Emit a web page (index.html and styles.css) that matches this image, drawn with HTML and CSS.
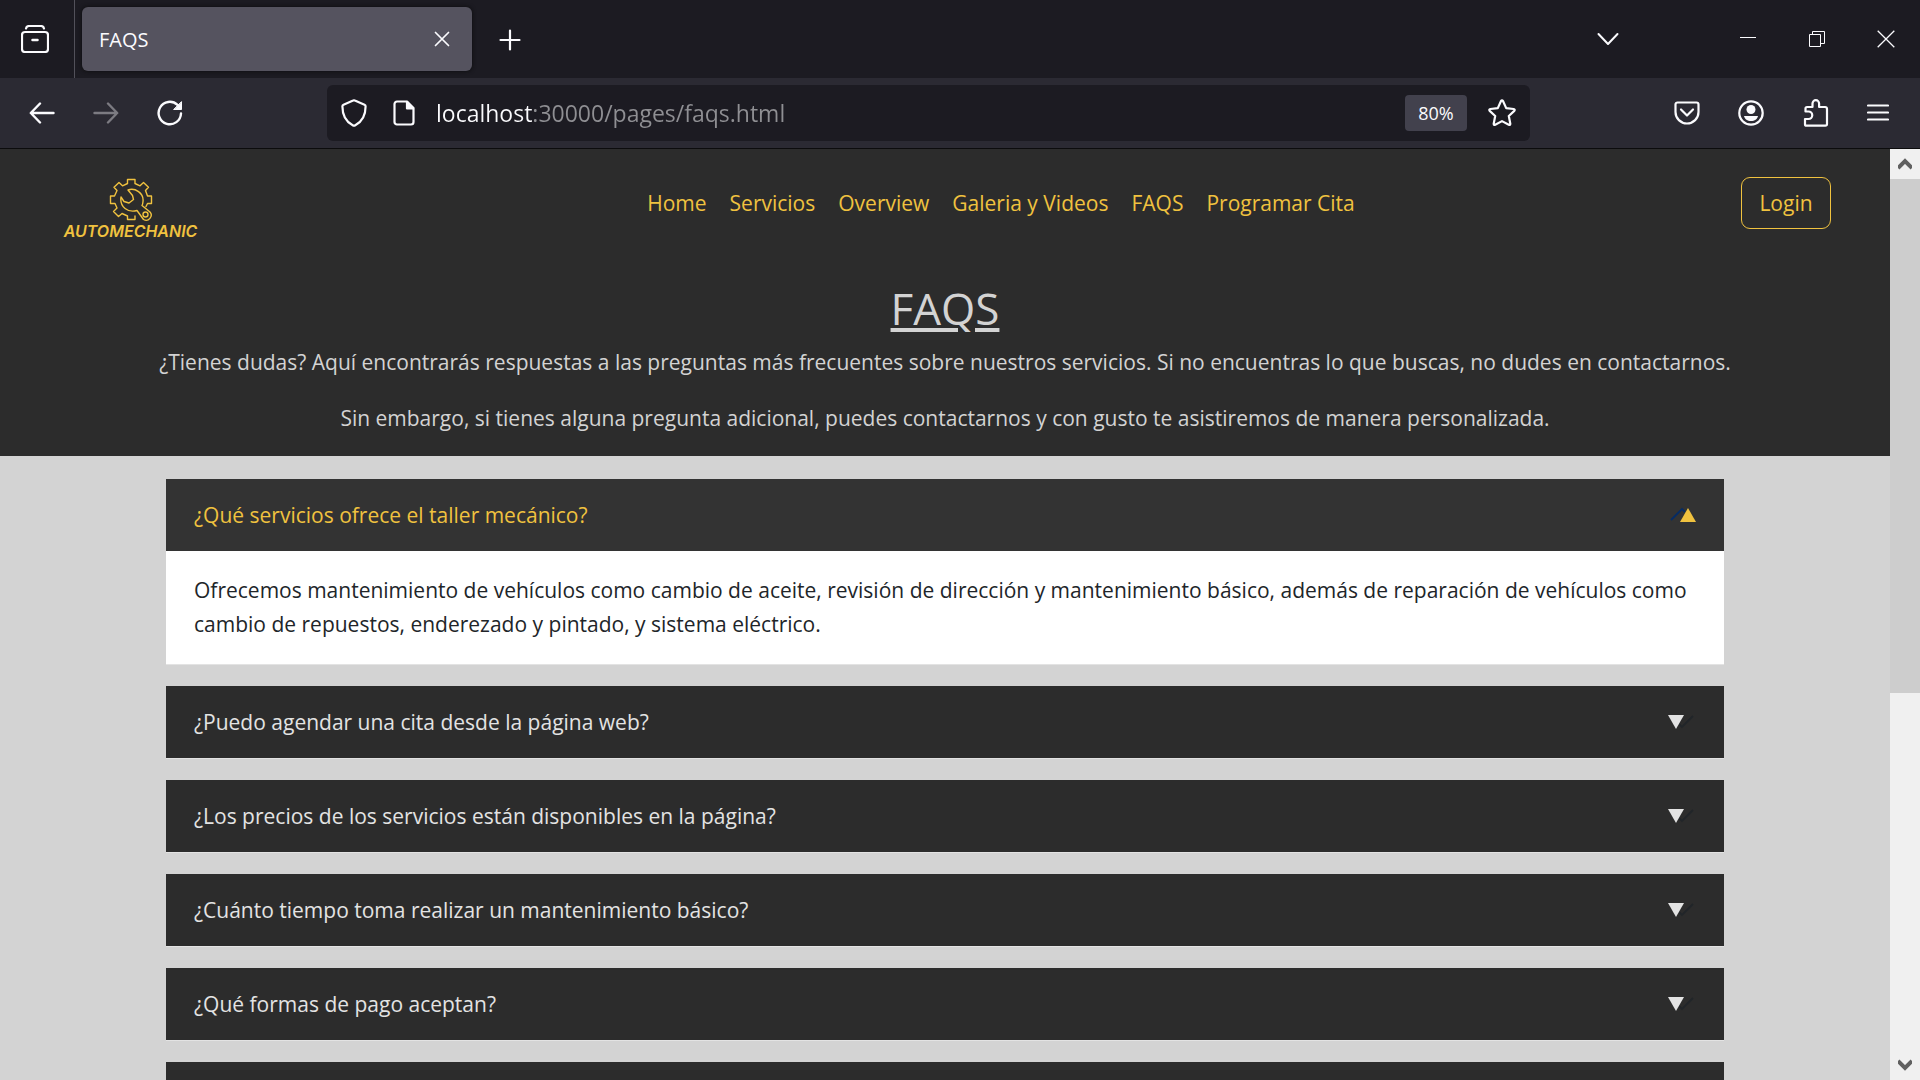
FILE: index.html
```html
<!DOCTYPE html>
<html lang="es">
<head>
<meta charset="utf-8">
<meta name="viewport" content="width=device-width, initial-scale=1">
<title>FAQS</title>
<link rel="stylesheet" href="styles.css">
</head>
<body>
<div class="browser">
  <div class="tabbar">
    <button class="icon-btn view-btn" aria-label="Firefox View">
      <svg width="28" height="28" viewBox="0 0 28 28" fill="none" stroke="currentColor" stroke-width="2.200" stroke-linecap="round"><path d="M5 3.500C5.300 1.800 6 1 8 1h12c2 0 2.700.8 3 2.500"/><rect x="1" y="7" width="26" height="20" rx="3"/><path d="M11.500 15h5" stroke-width="2.500"/></svg>
    </button>
    <div class="tab">
      <span class="tab-title">FAQS</span>
      <button class="icon-btn" aria-label="Cerrar pestaña">
        <svg width="16" height="16" viewBox="0 0 16 16" fill="none" stroke="currentColor" stroke-width="1.700" stroke-linecap="round"><path d="M1.500 1.500l13 13M14.500 1.500l-13 13"/></svg>
      </button>
    </div>
    <button class="icon-btn new-tab" aria-label="Nueva pestaña">
      <svg width="22" height="22" viewBox="0 0 22 22" fill="none" stroke="currentColor" stroke-width="2.200" stroke-linecap="round"><path d="M11 1.500v19M1.500 11h19"/></svg>
    </button>
    <div class="window-controls">
      <button class="icon-btn tabs-list" aria-label="Listar pestañas">
        <svg width="22" height="14" viewBox="0 0 22 14" fill="none" stroke="currentColor" stroke-width="2" stroke-linecap="round" stroke-linejoin="round"><path d="M1.500 2L11 12l9.500-10"/></svg>
      </button>
      <button class="icon-btn win-btn" aria-label="Minimizar">
        <svg width="16" height="16" viewBox="0 0 16 16" fill="currentColor"><path d="M0 6h16v1H0z"/></svg>
      </button>
      <button class="icon-btn win-btn" aria-label="Restaurar">
        <svg width="16" height="16" viewBox="0 0 16 16" fill="none" stroke="currentColor"><path d="M.5 3.500h11v12H.5zM3.500 3.500v-3h12v12h-4"/></svg>
      </button>
      <button class="icon-btn win-btn" aria-label="Cerrar">
        <svg width="18" height="18" viewBox="0 0 18 18" fill="none" stroke="currentColor" stroke-width="1.300"><path d="M.7.7l16.600 16.600M17.300.7L.7 17.300"/></svg>
      </button>
    </div>
  </div>

  <div class="toolbar">
    <div class="nav-buttons">
      <button class="icon-btn" aria-label="Atrás">
        <svg width="26" height="22" viewBox="0 0 26 22" fill="none" stroke="currentColor" stroke-width="2.400" stroke-linecap="round" stroke-linejoin="round"><path d="M24.500 11H2M11 1.500L1.800 11l9.200 9.500"/></svg>
      </button>
      <button class="icon-btn" aria-label="Adelante" disabled>
        <svg width="26" height="22" viewBox="0 0 26 22" fill="none" stroke="currentColor" stroke-width="2.400" stroke-linecap="round" stroke-linejoin="round"><path d="M1.500 11H24M15 1.500l9.200 9.500-9.200 9.500"/></svg>
      </button>
      <button class="icon-btn" aria-label="Recargar">
        <svg width="26" height="26" viewBox="0 0 26 26" fill="none" stroke="currentColor" stroke-width="2.400" stroke-linecap="round"><path d="M24 13.500A11.200 11.200 0 1 1 20.500 4.900l2 2"/><path d="M24.500 2v7.500h-7.500z" fill="currentColor" stroke-width="1"/></svg>
      </button>
    </div>
    <form class="urlbar">
      <svg width="26" height="28" viewBox="0 0 26 28" fill="none" stroke="currentColor" stroke-width="2.200" stroke-linejoin="round"><path d="M12.100 1.500a2 2 0 0 1 1.800 0l9.600 4.200c.7.300 1.100.9 1.100 1.600 0 8-3.200 15.300-10.300 19a2.500 2.500 0 0 1-2.600 0C4.600 22.600 1.400 15.300 1.400 7.300c0-.7.4-1.300 1.100-1.600z"/></svg>
      <svg class="doc-icon" width="22" height="26" viewBox="0 0 22 26" fill="none" stroke="currentColor" stroke-width="2.200" stroke-linejoin="round"><path d="M4 1.500h10l6.500 6.500v14a2.500 2.500 0 0 1-2.500 2.500H4A2.500 2.500 0 0 1 1.500 22V4A2.500 2.500 0 0 1 4 1.500z"/><path d="M14 2v6.500h6z" fill="currentColor"/></svg>
      <input class="url-input" type="text" aria-label="Dirección" value="localhost:30000/pages/faqs.html">
      <button class="zoom-badge" type="button">80%</button>
      <button class="icon-btn" type="button" aria-label="Marcar página">
        <svg width="28" height="28" viewBox="0 0 28 28" fill="none" stroke="currentColor" stroke-width="2.200" stroke-linejoin="round"><path d="M12.900 2.200q1.100-1.600 2.200 0l3.100 6.900 7.400.9q1.700.5.700 1.900l-5.500 5.100 1.500 7.700q0 1.700-1.500 1.100L14 22.100l-6.800 3.700q-1.500.6-1.500-1.100l1.500-7.700-5.500-5.100q-1-1.400.7-1.900l7.400-.9z"/></svg>
      </button>
    </form>
    <div class="tool-buttons">
      <button class="icon-btn" aria-label="Pocket">
        <svg width="26" height="24" viewBox="0 0 26 24" fill="none" stroke="currentColor" stroke-width="2.200" stroke-linecap="round" stroke-linejoin="round"><path d="M3.500 1.500h19a2 2 0 0 1 2 2V11a11.500 11.500 0 0 1-23 0V3.500a2 2 0 0 1 2-2z"/><path d="M7 8.500l6 6 6-6"/></svg>
      </button>
      <button class="icon-btn" aria-label="Cuenta">
        <svg width="26" height="26" viewBox="0 0 26 26" fill="none" stroke="currentColor" stroke-width="2.200"><circle cx="13" cy="13" r="11.700"/><circle cx="13" cy="9.500" r="4.500" fill="currentColor" stroke="none"/><path d="M6 16h14c-.5 3-3.500 5-7 5s-6.500-2-7-5z" fill="currentColor" stroke="none"/></svg>
      </button>
      <button class="icon-btn" aria-label="Extensiones">
        <svg width="26" height="28" viewBox="0 0 26 28" fill="none" stroke="currentColor" stroke-width="2.200" stroke-linejoin="round"><path d="M2.500 12V9.500a1.500 1.500 0 0 1 1.500-1.500h5.500V4.500a3.300 3.300 0 0 1 6.600 0V8H22a2 2 0 0 1 2 2v15a1.700 1.700 0 0 1-1.700 1.700H3.500a1.500 1.500 0 0 1-1.500-1.500V20h3.500a3.500 3.500 0 0 0 0-7.500H2.500z"/></svg>
      </button>
      <button class="icon-btn" aria-label="Menú">
        <svg width="22" height="20" viewBox="0 0 22 20" fill="none" stroke="currentColor" stroke-width="2.200" stroke-linecap="round"><path d="M1 2.500h20M1 9.500h20M1 16.500h20"/></svg>
      </button>
    </div>
  </div>

  <div class="viewport">
    <div class="page">
      <header class="site-header">
        <nav class="navbar">
          <a class="brand" href="#">
            <svg width="44" height="44" viewBox="0 0 44 44" fill="none" stroke="currentColor" stroke-width="1.400" stroke-linejoin="round" stroke-linecap="round"><path d="M26 38v3.500H18.500V38L13 35.500 9.500 38.500 4.500 33.500 8 30 6 25.500H1.500V18H5.500L8 12.500 5 9.300 10 4.500l3.500 3.300L18.500 5.500V1.500H26V5.500l5 2.300 3.500-3.300 5 4.800L36.500 12.500 38.500 18h4V25.500h-4l-1.500 3"/><path d="M19 12C26 9.500 35 15 34 23.500c-.1 1.600-.4 2.800-1 4l8 6.500c3.500 4-1.500 10.500-6.500 7.500l-6.500-9C19 35 10.500 29 12 19l3 4.500 5 1.500 4.500-3.500-1-4z"/><circle cx="36.500" cy="36.500" r="2.500"/></svg>
            <span class="brand-name">AUTOMECHANIC</span>
          </a>
          <div class="nav-links">
            <a href="#">Home</a>
            <a href="#">Servicios</a>
            <a href="#">Overview</a>
            <a href="#">Galeria y Videos</a>
            <a href="#">FAQS</a>
            <a href="#">Programar Cita</a>
          </div>
          <button class="login">Login</button>
        </nav>
        <div class="intro">
          <h1>FAQS</h1>
          <p>¿Tienes dudas? Aquí encontrarás respuestas a las preguntas más frecuentes sobre nuestros servicios. Si no encuentras lo que buscas, no dudes en contactarnos.</p>
          <p>Sin embargo, si tienes alguna pregunta adicional, puedes contactarnos y con gusto te asistiremos de manera personalizada.</p>
        </div>
      </header>

      <main class="faq-list">
        <section class="faq">
          <h2><button class="question open" aria-expanded="true">¿Qué servicios ofrece el taller mecánico?
            <svg class="marker" width="28" height="16" viewBox="0 0 28 16"><path d="M3 13L14 2l3 3" fill="none" stroke="#052c65" stroke-width="1.800"/><path d="M12 15L20 1l8 14z" fill="#f0c23f"/></svg></button></h2>
          <p class="answer">Ofrecemos mantenimiento de vehículos como cambio de aceite, revisión de dirección y mantenimiento básico, además de reparación de vehículos como cambio de repuestos, enderezado y pintado, y sistema eléctrico.</p>
        </section>
        <section class="faq">
          <h2><button class="question" aria-expanded="false">¿Puedo agendar una cita desde la página web?
            <svg class="marker" width="28" height="16" viewBox="0 0 28 16"><path d="M11 10l3 3L25 2" fill="none" stroke="#212529" stroke-width="1.800"/><path d="M0 1h16L8 15z" fill="#e3e3e3"/></svg></button></h2>
        </section>
        <section class="faq">
          <h2><button class="question" aria-expanded="false">¿Los precios de los servicios están disponibles en la página?
            <svg class="marker" width="28" height="16" viewBox="0 0 28 16"><path d="M11 10l3 3L25 2" fill="none" stroke="#212529" stroke-width="1.800"/><path d="M0 1h16L8 15z" fill="#e3e3e3"/></svg></button></h2>
        </section>
        <section class="faq">
          <h2><button class="question" aria-expanded="false">¿Cuánto tiempo toma realizar un mantenimiento básico?
            <svg class="marker" width="28" height="16" viewBox="0 0 28 16"><path d="M11 10l3 3L25 2" fill="none" stroke="#212529" stroke-width="1.800"/><path d="M0 1h16L8 15z" fill="#e3e3e3"/></svg></button></h2>
        </section>
        <section class="faq">
          <h2><button class="question" aria-expanded="false">¿Qué formas de pago aceptan?
            <svg class="marker" width="28" height="16" viewBox="0 0 28 16"><path d="M11 10l3 3L25 2" fill="none" stroke="#212529" stroke-width="1.800"/><path d="M0 1h16L8 15z" fill="#e3e3e3"/></svg></button></h2>
        </section>
        <section class="faq">
          <h2><button class="question" aria-expanded="false" aria-label="Otra pregunta"></button></h2>
        </section>
      </main>
    </div>

    <div class="scrollbar">
      <div class="scroll-arrow"><svg width="14" height="12" viewBox="0 0 14 12" fill="none" stroke="currentColor" stroke-width="4"><path d="M0 10l7-7 7 7"/></svg></div>
      <div class="scroll-track"><div class="scroll-thumb"></div></div>
      <div class="scroll-arrow"><svg width="14" height="12" viewBox="0 0 14 12" fill="none" stroke="currentColor" stroke-width="4"><path d="M0 2l7 7 7-7"/></svg></div>
    </div>
  </div>
</div>
</body>
</html>
```
FILE: styles.css
```css
* { box-sizing: border-box; }

body {
  margin: 0;
  font-family: "Open Sans", "Noto Sans", sans-serif;
  font-size: 21px;
}

button, input { font: inherit; color: inherit; }
svg { display: block; flex: none; }
a { color: inherit; text-decoration: none; }

.browser {
  display: flex;
  flex-direction: column;
  height: 100vh;
  color: #fbfbfe;
}

.icon-btn {
  display: flex;
  align-items: center;
  justify-content: center;
  flex: none;
  padding: 0;
  border: 0;
  background: none;
}
.icon-btn:disabled { color: #7c7b82; }

/* Tab strip */
.tabbar {
  display: flex;
  flex: none;
  height: 78px;
  background: #1c1b22;
}
.view-btn {
  width: 75px;
  padding-right: 4px;
  border-right: 1px solid #52515a;
}
.tab {
  display: flex;
  align-items: center;
  justify-content: space-between;
  width: 390px;
  margin: 7px;
  padding: 0 22px 0 17px;
  border-radius: 6px;
  background: #55535f;
  box-shadow: 0 0 4px #0c0c0d;
}
.tab-title { font-size: 20px; }
.new-tab { width: 62px; padding-top: 2px; }
.window-controls {
  display: flex;
  margin-left: auto;
}
.tabs-list { width: 80px; margin-right: 65px; }
.win-btn { width: 69px; }

/* Navigation toolbar */
.toolbar {
  display: flex;
  align-items: center;
  flex: none;
  height: 71px;
  padding: 0 31px 0 29px;
  border-bottom: 1px solid #0c0c0d;
  background: #2b2a33;
}
.nav-buttons { display: flex; gap: 38px; width: 298px; }
.urlbar {
  display: flex;
  align-items: center;
  flex: 1;
  height: 56px;
  padding: 0 14px;
  border-radius: 6px;
  background: #1c1b22;
}
.doc-icon { margin: 0 21px 0 26px; }
.url-input {
  flex: 1;
  min-width: 0;
  padding: 0;
  border: 0;
  outline: 0;
  font-size: 23px;
  color: transparent;
  background: linear-gradient(90deg, #fbfbfe 96px, #8f8f93 96px);
  background-clip: text;
}
.zoom-badge {
  width: 62px;
  height: 36px;
  margin-right: 21px;
  padding: 0;
  border: 0;
  border-radius: 4px;
  background: #42414d;
  font-size: 18px;
}
.tool-buttons {
  display: flex;
  align-items: center;
  justify-content: space-between;
  width: 359px;
  padding-left: 144px;
}

/* Web page */
.viewport {
  display: flex;
  flex: 1;
  min-height: 0;
}
.page {
  flex: 1;
  overflow: hidden;
  background: #d3d3d3;
}
.site-header { background: #2c2c2c; color: #d3d3d3; }
.navbar {
  display: flex;
  align-items: center;
  height: 108px;
  padding-right: 59px;
  color: #f0c23f;
}
.brand {
  display: flex;
  flex-direction: column;
  align-items: center;
  width: 261px;
  padding-top: 12px;
}
.brand-name {
  font: italic 600 16px/18px Inter, sans-serif;
}
.nav-links {
  display: flex;
  justify-content: center;
  flex: 1;
  gap: 23px;
}
.login {
  width: 90px;
  height: 52px;
  padding: 0;
  border: 1px solid #f0c23f;
  border-radius: 9px;
  background: none;
}
.intro {
  padding: 24px 24px 21px;
  text-align: center;
}
.intro h1 {
  margin: 0 0 10px;
  font-size: 44px;
  font-weight: 400;
  line-height: 54px;
  text-decoration: underline;
}
.intro p { margin: 0 0 22px; line-height: 34px; }
.intro p:last-child { margin: 0; }

/* Accordion */
.faq-list {
  display: flex;
  flex-direction: column;
  gap: 21px;
  padding: 23px 166px;
}
.faq { border-bottom: 1px solid #e3e3e3; }
.faq h2 { margin: 0; font-size: 21px; font-weight: 400; }
.question {
  display: flex;
  align-items: center;
  justify-content: space-between;
  width: 100%;
  height: 72px;
  padding: 0 28px;
  border: 0;
  background: #2c2c2c;
  color: #e3e3e3;
  text-align: left;
}
.question.open { background: #333; color: #f0c23f; }
.answer {
  margin: 0;
  padding: 22px 28px 23px;
  background: #fff;
  color: #212529;
  line-height: 34px;
}

/* Scrollbar */
.scrollbar {
  display: flex;
  flex-direction: column;
  width: 30px;
  background: #f0f0f0;
  color: #606060;
}
.scroll-arrow {
  display: flex;
  align-items: center;
  justify-content: center;
  height: 30px;
}
.scroll-track { flex: 1; }
.scroll-thumb { height: 59%; background: #cdcdcd; }
```
